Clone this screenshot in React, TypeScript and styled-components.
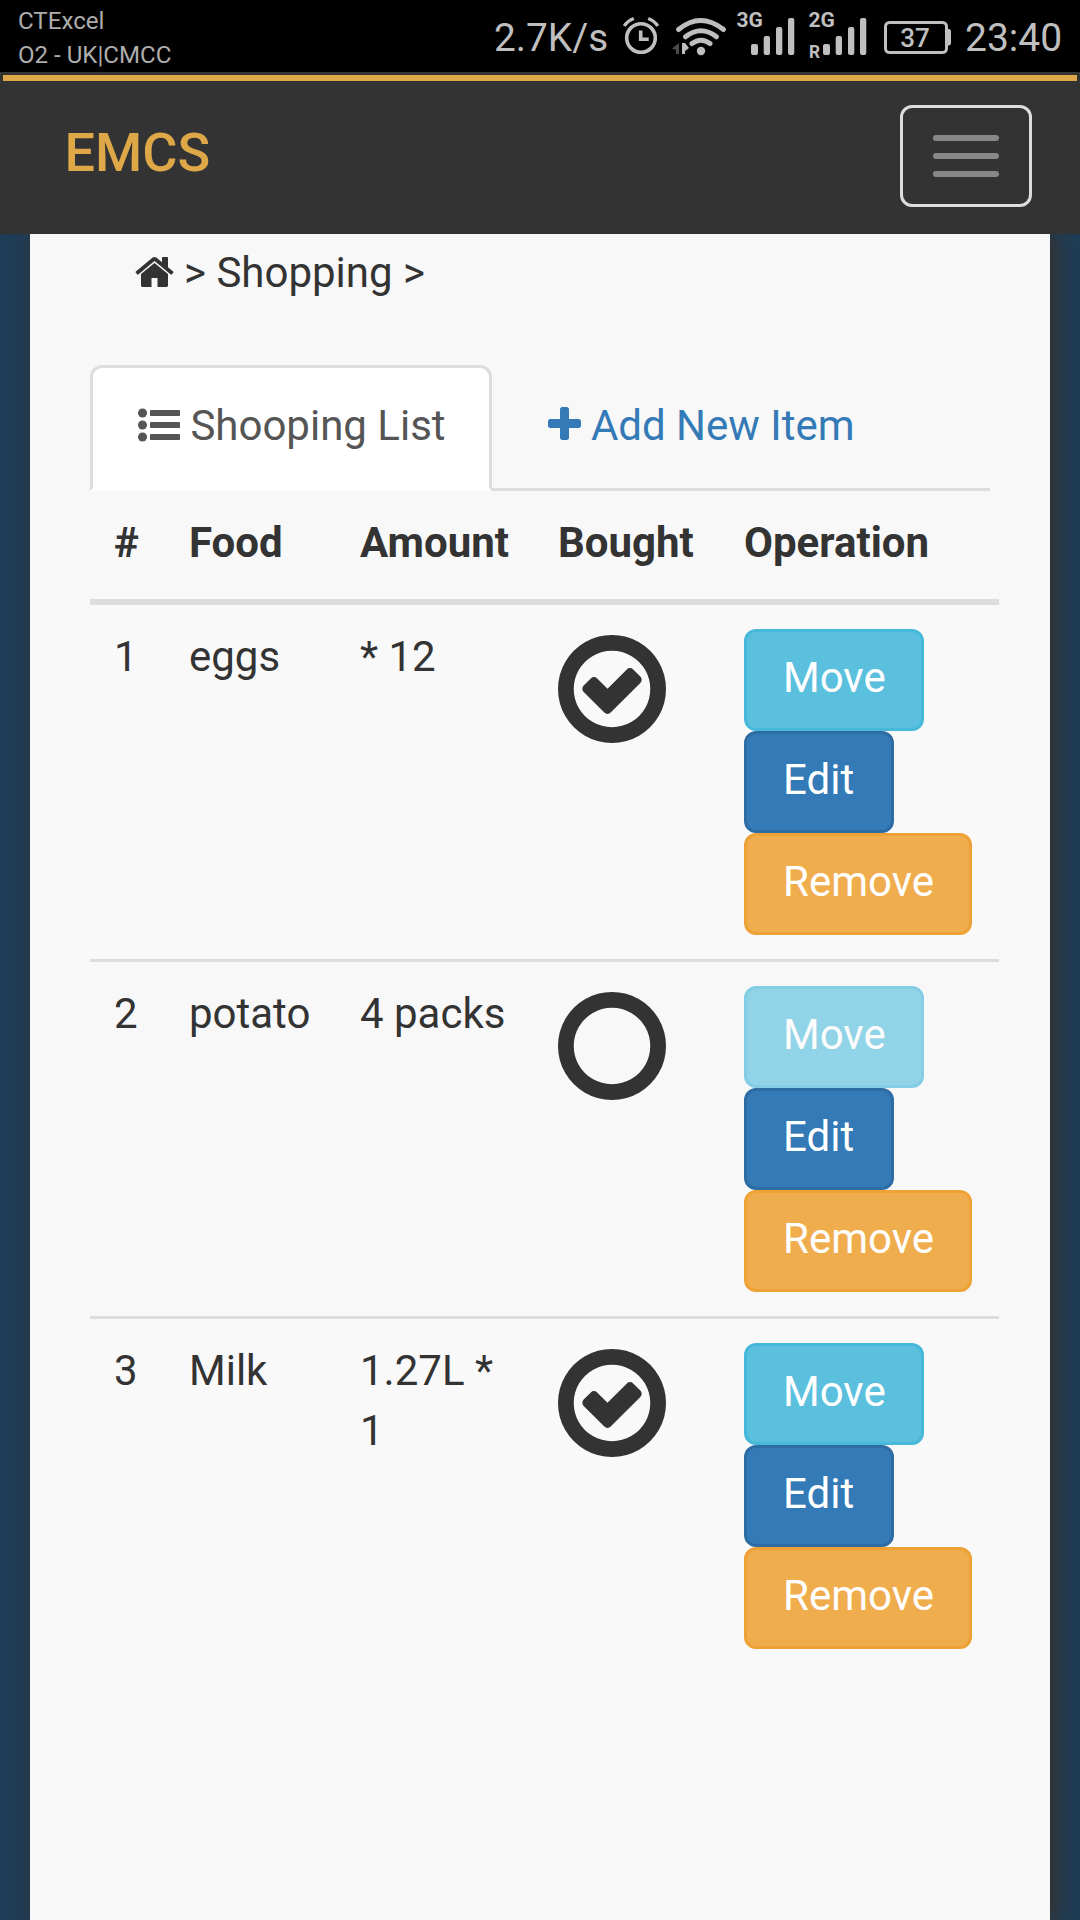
import React from "react";
import styled, { createGlobalStyle, css } from "styled-components";

const GlobalStyle = createGlobalStyle`
  * { box-sizing: border-box; }
  body {
    margin: 0;
    background: #1f3d57;
    color: #333;
    font: 400 42px/60px Roboto, sans-serif;
    overflow: hidden;
  }
`;

const Screen = styled.div`
  width: 1080px;
  height: 1920px;
  display: flex;
  flex-direction: column;
  overflow: hidden;
`;

const StatusBar = styled.header`
  height: 72px;
  flex: none;
  display: flex;
  justify-content: space-between;
  background: #000;
  color: #bfbfbf;
  padding: 0 18px;
`;

const Carriers = styled.div`
  padding-top: 4px;
  font-size: 24.1px;
  line-height: 34px;
  color: #adadad;
`;

const StatusRight = styled.div`
  display: flex;
  align-items: flex-start;
`;

const StatusText = styled.span<{ $w: number; $size: number }>`
  width: ${(p) => p.$w}px;
  margin-top: 2px;
  font-size: ${(p) => p.$size}px;
  line-height: 72px;
  white-space: nowrap;
`;

const StatusIcons = styled.svg`
  display: block;
  width: 350px;
  height: 72px;
  font-family: Roboto, sans-serif;
`;

const Navbar = styled.nav`
  height: 162px;
  flex: none;
  position: relative;
  z-index: 1;
  background: #333;
  padding: 3px 3px 0;
`;

const NavInner = styled.div`
  border-top: 6px solid #dea748;
  padding: 24px 45px 0 61.5px;
  display: flex;
  justify-content: space-between;
`;

const Brand = styled.a`
  font-size: 54px;
  line-height: 60px;
  font-weight: 500;
  color: #dea748;
  padding-top: 18px;
`;

const Toggle = styled.button`
  width: 132px;
  height: 102px;
  padding: 0 30px;
  border: 3px solid #ddd;
  border-radius: 12px;
  background: transparent;
  display: flex;
  flex-direction: column;
  justify-content: center;
  gap: 12px;
`;

const ToggleBar = styled.span`
  height: 6px;
  border-radius: 3px;
  background: #888;
`;

const Panel = styled.main`
  flex: 1;
  margin: 0 30px;
  padding: 0 51px 0 60px;
  background: #f8f8f8;
  box-shadow: 6px 0 20px 3px #333;
`;

const Breadcrumb = styled.div`
  display: flex;
  align-items: flex-start;
  gap: 10px;
  padding: 9px 0 0 45px;
  height: 131px;
`;

const Tabs = styled.div`
  display: flex;
  gap: 7.5px;
  width: 900px;
  border-bottom: 3px solid #ddd;
`;

const Tab = styled.a<{ $active?: boolean }>`
  display: flex;
  gap: 10.4px;
  height: 126px;
  margin-bottom: -3px;
  padding: 28px 45px 32px;
  border: 3px solid transparent;
  border-radius: 12px 12px 0 0;
  color: #337ab7;
  white-space: nowrap;
  ${(p) =>
    p.$active &&
    css`
      width: 402px;
      background: #fff;
      color: #555;
      border-color: #ddd #ddd transparent;
    `}
`;

const Glyph = styled.svg<{ $size?: number }>`
  display: block;
  flex: none;
  height: ${(p) => p.$size || 42}px;
  fill: currentColor;
`;

const InlineGlyph = styled(Glyph)`
  margin-top: 8px;
`;

const Row = styled.div<{ $striped?: boolean; $line?: boolean }>`
  display: grid;
  grid-template-columns: 75px 171px 198px 186px 279px;
  width: 909px;
  background: ${(p) => (p.$striped ? "#f9f9f9" : "transparent")};
  border-top: ${(p) => (p.$line ? "3px solid #ddd" : "none")};
`;

const HeadRow = styled(Row)`
  font-weight: 700;
  border-bottom: 6px solid #ddd;
`;

const Cell = styled.div`
  padding: 22px 20px 26px 24px;
`;

const ControlCell = styled(Cell)`
  padding-top: 24px;
  padding-bottom: 24px;
`;

const Mark = styled.div`
  padding-top: 6px;
`;

const Actions = styled.div`
  display: flex;
  flex-direction: column;
  align-items: flex-start;
`;

const tones = {
  info: { fill: "#5bc0de", edge: "#46b8da", width: 180 },
  primary: { fill: "#337ab7", edge: "#2e6da4", width: 150 },
  warning: { fill: "#f0ad4e", edge: "#eea236", width: 228 },
};

const Button = styled.button<{ $tone: keyof typeof tones }>`
  width: ${(p) => tones[p.$tone].width}px;
  height: 102px;
  padding: 16px 0 20px 36px;
  border: 3px solid ${(p) => tones[p.$tone].edge};
  border-radius: 12px;
  background: ${(p) => tones[p.$tone].fill};
  color: #fff;
  font: inherit;
  text-align: left;
  white-space: nowrap;
  &:disabled {
    opacity: 0.65;
  }
`;

const RING =
  "M1312 896q0-148-73-273t-198-198-273-73-273 73-198 198-73 273 73 273 198 198 273 73 273-73 198-198 73-273zm224 0q0 209-103 385.5t-279.5 279.5-385.5 103-385.5-103-279.5-279.5-103-385.5 103-385.5 279.5-279.5 385.5-103 385.5 103 279.5 279.5 103 385.5z";
const CHECK =
  "M1171 809l-422 422q-19 19-45 19t-45-19l-294-294q-19-19-19-45t19-45l102-102q19-19 45-19t45 19l147 147 275-275q19-19 45-19t45 19l102 102q19 19 19 45t-19 45z";
const HOME =
  "M1472 992v480q0 26-19 45t-45 19h-384v-384h-256v384h-384q-26 0-45-19t-19-45v-480q0-1 .5-3t.5-3l575-474 575 474q1 2 1 6zm223-69l-62 74q-8 9-21 11h-3q-13 0-21-7l-692-577-692 577q-12 8-24 7-13-2-21-11l-62-74q-8-10-7-23.5t11-21.5l719-599q32-26 76-26t76 26l244 204v-195q0-14 9-23t23-9h192q14 0 23 9t9 23v408l219 182q10 8 11 21.5t-7 23.5z";
const PLUS =
  "M1600 736v192q0 40-28 68t-68 28h-416v416q0 40-28 68t-68 28h-192q-40 0-68-28t-28-68v-416h-416q-40 0-68-28t-28-68v-192q0-40 28-68t68-28h416v-416q0-40 28-68t68-28h192q40 0 68 28t28 68v416h416q40 0 68 28t28 68z";

const CheckMark = ({ checked }: { checked: boolean }) => (
  <Glyph $size={108} viewBox="0 128 1536 1536">
    <path d={RING} />
    {checked && <path d={CHECK} />}
  </Glyph>
);

const ListGlyph = () => (
  <InlineGlyph viewBox="0 0 1792 1792">
    {[384, 896, 1408].map((y) => (
      <g key={y}>
        <circle cx="192" cy={y} r="192" />
        <rect x="512" y={y - 128} width="1280" height="256" rx="32" />
      </g>
    ))}
  </InlineGlyph>
);

const SignalBars = ({ x }: { x: number }) => (
  <g fill="#bfbfbf">
    <rect x={x} y="44" width="7" height="11" rx="2" />
    <rect x={x + 12.7} y="36" width="6.3" height="19" rx="2" />
    <rect x={x + 25} y="27" width="6.3" height="28" rx="2" />
    <rect x={x + 37} y="18" width="6.3" height="37" rx="2" />
  </g>
);

// Alarm, wifi, both SIM signals and the battery; the viewBox keeps screen coordinates.
const StatusGlyphs = () => (
  <StatusIcons viewBox="615 0 350 72">
    <g fill="none" stroke="#bfbfbf" strokeLinecap="round">
      <circle cx="641" cy="38" r="14.3" strokeWidth="3.6" />
      <path d="M640.7 30.5v8.7h8" strokeWidth="3.6" strokeLinecap="butt" />
      <path d="M624.3 26q3-5 9.5-7.5M657.7 26q-3-5-9.5-7.5" strokeWidth="3.4" strokeLinecap="butt" />
      <path d="M678.5 29.5q22-18 45 0" strokeWidth="5" />
      <path d="M685.5 36.8q15.5-12 31 0" strokeWidth="5" />
      <path d="M692 43.5q9-6.5 18 0" strokeWidth="5" />
    </g>
    <circle cx="701" cy="51" r="4.2" fill="#bfbfbf" />
    <path d="M679 43v11h-3v-4l-4-1.5z" fill="#4b4b4b" />
    <path d="M682 43h3l4 5-4 3v3h-3z" fill="#bfbfbf" />
    <g fill="#bfbfbf" fontWeight="700">
      <text x="736.5" y="27" fontSize="21">3G</text>
      <text x="808.5" y="27" fontSize="21">2G</text>
      <text x="809" y="58" fontSize="18" textLength="11" lengthAdjust="spacingAndGlyphs">R</text>
    </g>
    <SignalBars x={751} />
    <SignalBars x={823} />
    <rect x="885.5" y="22.5" width="61" height="30" rx="4" fill="none" stroke="#bfbfbf" strokeWidth="3" />
    <path d="M948 29h1.5l1.5 1.5v13.5l-1.5 1.5h-1.5z" fill="#bfbfbf" />
    <text x="900.3" y="47" fontSize="26" fontWeight="500" fill="#bfbfbf">37</text>
  </StatusIcons>
);

const items = [
  { id: 1, food: "eggs", amount: "* 12", bought: true },
  { id: 2, food: "potato", amount: "4 packs", bought: false },
  { id: 3, food: "Milk", amount: "1.27L * 1", bought: true },
];

export default function App() {
  return (
    <Screen>
      <GlobalStyle />
      <StatusBar>
        <Carriers>
          <div>CTExcel</div>
          <div>O2 - UK|CMCC</div>
        </Carriers>
        <StatusRight>
          <StatusText $w={121} $size={38.8}>2.7K/s</StatusText>
          <StatusGlyphs />
          <StatusText $w={97} $size={39}>23:40</StatusText>
        </StatusRight>
      </StatusBar>
      <Navbar>
        <NavInner>
          <Brand>EMCS</Brand>
          <Toggle aria-label="Toggle navigation">
            <ToggleBar />
            <ToggleBar />
            <ToggleBar />
          </Toggle>
        </NavInner>
      </Navbar>
      <Panel>
        <Breadcrumb>
          <InlineGlyph viewBox="64 0 1664 1792">
            <path d={HOME} />
          </InlineGlyph>
          <span>&gt; Shopping &gt;</span>
        </Breadcrumb>
        <Tabs>
          <Tab $active>
            <ListGlyph />
            Shooping List
          </Tab>
          <Tab>
            <InlineGlyph viewBox="192 0 1408 1792">
              <path d={PLUS} />
            </InlineGlyph>
            Add New Item
          </Tab>
        </Tabs>
        <HeadRow>
          <Cell>#</Cell>
          <Cell>Food</Cell>
          <Cell>Amount</Cell>
          <Cell>Bought</Cell>
          <Cell>Operation</Cell>
        </HeadRow>
        {items.map((item, i) => (
          <Row key={item.id} $striped={i % 2 === 0} $line={i > 0}>
            <Cell>{item.id}</Cell>
            <Cell>{item.food}</Cell>
            <Cell>{item.amount}</Cell>
            <ControlCell>
              <Mark>
                <CheckMark checked={item.bought} />
              </Mark>
            </ControlCell>
            <ControlCell>
              <Actions>
                <Button $tone="info" disabled={!item.bought}>Move</Button>
                <Button $tone="primary">Edit</Button>
                <Button $tone="warning">Remove</Button>
              </Actions>
            </ControlCell>
          </Row>
        ))}
      </Panel>
    </Screen>
  );
}
